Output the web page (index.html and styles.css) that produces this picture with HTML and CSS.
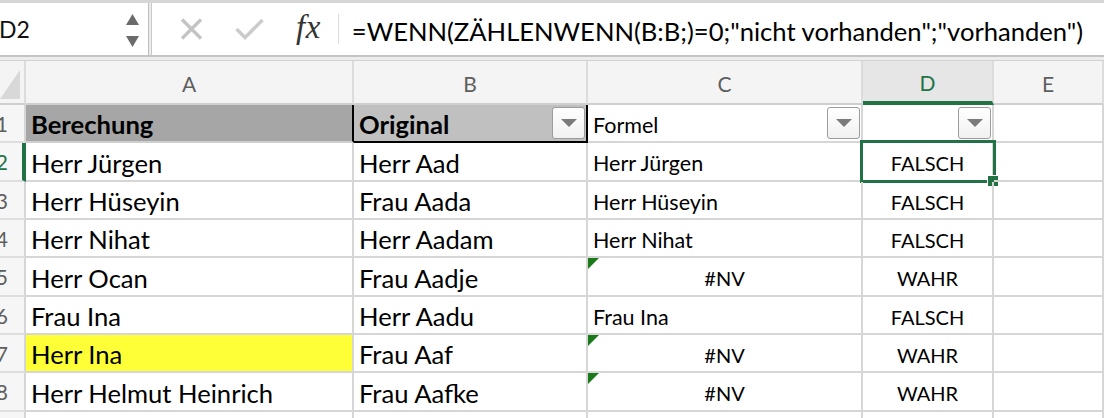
FILE: index.html
```html
<!DOCTYPE html>
<html lang="de">
<head>
<meta charset="utf-8">
<title>Excel</title>
<link rel="stylesheet" href="styles.css">
</head>
<body>
<div class="app">
  <div class="fbar">
    <div class="namebox">
      <span class="ref">D2</span>
      <div class="spin">
        <svg width="13" height="11" viewBox="0 0 13 11"><path d="M6.5 0 L13 11 L0 11 Z" fill="#6b6b6b"/></svg>
        <svg width="13" height="11" viewBox="0 0 13 11"><path d="M0 0 L13 0 L6.5 11 Z" fill="#6b6b6b"/></svg>
      </div>
    </div>
    <div class="divider"></div>
    <div class="fxarea">
      <svg class="ic-x" width="23" height="22" viewBox="0 0 23 22"><path d="M2 1.5 L21 20.5 M21 1.5 L2 20.5" stroke="#c4c4c4" stroke-width="3.4" fill="none"/></svg>
      <svg class="ic-ok" width="29" height="22" viewBox="0 0 29 22"><path d="M1.5 11 L10 19.5 L27.5 2" stroke="#cbcbcb" stroke-width="3.4" fill="none"/></svg>
      <span class="fx">fx</span>
      <div class="vsep"></div>
      <div class="formula">=WENN(ZÄHLENWENN(B:B;)=0;"nicht vorhanden";"vorhanden")</div>
    </div>
  </div>
  <div class="hlines"></div>
  <div class="sheet">
    <div class="ch corner"><div class="selall"></div></div>
    <div class="ch">A</div>
    <div class="ch">B</div>
    <div class="ch">C</div>
    <div class="ch ch-sel">D</div>
    <div class="ch">E</div>

    <div class="rh"><span>1</span></div>
    <div class="c big bold hdrA">Berechung</div>
    <div class="c big bold hdrB"><span>Original</span><span class="fbtn"><i></i></span></div>
    <div class="c small filt"><span>Formel</span><span class="fbtn"><i></i></span></div>
    <div class="c small filt"><span></span><span class="fbtn"><i></i></span></div>
    <div class="c"></div>

    <div class="rh rh-sel"><span>2</span></div>
    <div class="c big">Herr Jürgen</div>
    <div class="c big">Herr Aad</div>
    <div class="c small">Herr Jürgen</div>
    <div class="c small ctr sel">FALSCH<div class="selbox"></div><div class="handle"></div></div>
    <div class="c"></div>

    <div class="rh"><span>3</span></div>
    <div class="c big">Herr Hüseyin</div>
    <div class="c big">Frau Aada</div>
    <div class="c small">Herr Hüseyin</div>
    <div class="c small ctr">FALSCH</div>
    <div class="c"></div>

    <div class="rh"><span>4</span></div>
    <div class="c big">Herr Nihat</div>
    <div class="c big">Herr Aadam</div>
    <div class="c small">Herr Nihat</div>
    <div class="c small ctr">FALSCH</div>
    <div class="c"></div>

    <div class="rh"><span>5</span></div>
    <div class="c big">Herr Ocan</div>
    <div class="c big">Frau Aadje</div>
    <div class="c small ctr err">#NV<span class="tri"></span></div>
    <div class="c small ctr">WAHR</div>
    <div class="c"></div>

    <div class="rh"><span>6</span></div>
    <div class="c big">Frau Ina</div>
    <div class="c big">Herr Aadu</div>
    <div class="c small">Frau Ina</div>
    <div class="c small ctr">FALSCH</div>
    <div class="c"></div>

    <div class="rh"><span>7</span></div>
    <div class="c big yellow">Herr Ina</div>
    <div class="c big">Frau Aaf</div>
    <div class="c small ctr err">#NV<span class="tri"></span></div>
    <div class="c small ctr">WAHR</div>
    <div class="c"></div>

    <div class="rh"><span>8</span></div>
    <div class="c big">Herr Helmut Heinrich</div>
    <div class="c big">Frau Aafke</div>
    <div class="c small ctr err">#NV<span class="tri"></span></div>
    <div class="c small ctr">WAHR</div>
    <div class="c"></div>

    <div class="rh"><span>9</span></div>
    <div class="c"></div>
    <div class="c"></div>
    <div class="c"></div>
    <div class="c"></div>
    <div class="c"></div>
  </div>
</div>
</body>
</html>
```

FILE: styles.css
```css
html, body {
  margin: 0;
  padding: 0;
  background: #ffffff;
}
body {
  width: 1104px;
  height: 418px;
  overflow: hidden;
  font-family: Lato, "Liberation Sans", sans-serif;
  color: #000;
}
.app {
  width: 1104px;
  height: 418px;
  overflow: hidden;
}

/* formula bar */
.fbar {
  height: 55px;
  box-sizing: border-box;
  border-top: 3px solid #d6d6d6;
  display: flex;
  background: #ffffff;
}
.namebox {
  width: 148px;
  display: flex;
  align-items: center;
  justify-content: space-between;
  padding-right: 9px;
  box-sizing: border-box;
}
.ref {
  font-size: 23px;
  margin-left: -1px;
  color: #111;
}
.spin {
  display: flex;
  flex-direction: column;
  gap: 11px;
  margin-top: 2px;
}
.spin svg { display: block; }
.divider {
  width: 2px;
  background: #ececec;
  border-left: 1px solid #bdbdbd;
  border-right: 1px solid #c9c9c9;
}
.fxarea {
  flex: 1;
  display: flex;
  align-items: center;
}
.ic-x { margin-left: 28px; }
.ic-ok { margin-left: 32px; }
.fx {
  margin-left: 32px;
  font-family: "Liberation Serif", "DejaVu Serif", serif;
  font-style: italic;
  font-size: 33px;
  color: #333;
  letter-spacing: 0.5px;
  line-height: 1;
  margin-top: -3px;
}
.vsep {
  margin-left: 17px;
  width: 1px;
  height: 30px;
  background: #dcdcdc;
}
.formula {
  margin-left: 13px;
  font-size: 25.6px;
  white-space: nowrap;
  color: #000;
  padding-top: 3px;
}

.hlines {
  height: 6px;
  box-sizing: border-box;
  border-top: 2px solid #c4c4c4;
  border-bottom: 1px solid #d2d2d2;
  background: #ededed;
}

/* sheet grid */
.sheet {
  display: grid;
  grid-template-columns: 26px 328px 234px 275px 131px 1fr;
  grid-template-rows: 44px 38px 39px 38px 38px 39px 38px 38px 39px 38px;
}
.ch, .rh, .c {
  box-sizing: border-box;
  border-right: 2px solid #d6d6d6;
  border-bottom: 2px solid #d6d6d6;
  position: relative;
  min-width: 0;
}
.ch {
  background: #f4f4f4;
  border-right-color: #dcdcdc;
  border-bottom-color: #cfcfcf;
  display: flex;
  align-items: center;
  justify-content: center;
  font-size: 21px;
  color: #5e5e5e;
  padding-top: 2px;
}
.ch-sel {
  background: #e6e6e6;
  color: #217346;
  border-bottom: 4px solid #217346;
}
.corner {
  align-items: flex-end;
  justify-content: flex-start;
  padding: 0 0 4px 0;
}
.selall {
  width: 20px;
  height: 29px;
  background: #d8d8d8;
  clip-path: polygon(100% 0, 100% 100%, 0 100%);
}
.rh {
  background: #f6f6f6;
  display: flex;
  justify-content: flex-end;
  align-items: center;
  padding-right: 16px;
  overflow: hidden;
  font-size: 21px;
  color: #5e5e5e;
  white-space: nowrap;
  border-bottom-color: #dedede;
}
.rh-sel {
  color: #217346;
  border-right: 4px solid #217346;
  padding-right: 14px;
}
.c {
  display: flex;
  align-items: center;
  padding-left: 5px;
  white-space: nowrap;
}
.big {
  font-size: 25.6px;
  padding-top: 2px;
}
.small {
  font-size: 21.5px;
  padding-top: 3px;
}
.bold { font-weight: 700; }
.ctr {
  justify-content: center;
  padding-left: 0;
  font-size: 20px;
}
.hdrA {
  background: #a6a6a6;
  border-right-color: #000;
  border-bottom-color: #cfcfcf;
}
.hdrB {
  background: #c0c0c0;
  border-right-color: #000;
  border-bottom-color: #000;
  justify-content: space-between;
  padding-right: 1px;
}
.filt {
  justify-content: space-between;
  padding-right: 1px;
}
.fbtn {
  width: 33px;
  height: 32px;
  box-sizing: border-box;
  border: 1px solid #9c9c9c;
  border-radius: 3px;
  background: linear-gradient(#ffffff, #f1f1f1);
  display: flex;
  align-items: center;
  justify-content: center;
  margin-top: -3px;
}
.fbtn i {
  width: 0;
  height: 0;
  border-left: 8px solid transparent;
  border-right: 8px solid transparent;
  border-top: 8px solid #7b7b7b;
}
.yellow { background: #ffff38; }
.tri {
  position: absolute;
  left: 0;
  top: 0;
  width: 11px;
  height: 11px;
  background: #1a7a1a;
  clip-path: polygon(0 0, 100% 0, 0 100%);
}
.selbox {
  position: absolute;
  left: -3px;
  top: -3px;
  width: 136px;
  height: 43px;
  box-sizing: border-box;
  border: 3px solid #217346;
}
.handle {
  position: absolute;
  left: 125px;
  top: 33px;
  width: 10px;
  height: 10px;
  background: #217346;
  outline: 1px solid #ffffff;
}
```
